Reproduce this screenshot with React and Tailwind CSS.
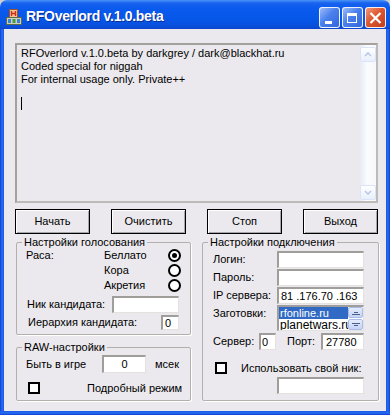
import React from 'react';

const field =
  'bg-white border-t-2 border-l-2 border-r border-b border-t-[#a09e9a] border-l-[#a09e9a] border-r-[#e4e2de] border-b-[#e4e2de]';
const group =
  'border border-[#b2b0ad] rounded-[2px] shadow-[1px_1px_0_#ffffff]';
const legend = 'ml-[5px] px-[2px] leading-[13px]';

function TitleIcon() {
  return (
    <svg width="16" height="16" viewBox="0 0 16 16">
      <rect x="3.5" y="0.5" width="8" height="8" fill="#f2c28f" stroke="#a0522d" />
      <path d="M5.5 2v5M9.5 2v5M5.5 4.5h4" stroke="#d2281e" strokeWidth="1.4" />
      <rect x="0.5" y="8.5" width="15" height="7" fill="#c9d3bd" stroke="#5d6b4a" />
      <rect x="2" y="10" width="3" height="4" fill="#3f7fd8" />
      <rect x="6.5" y="10" width="3" height="4" fill="#4a9b3b" />
      <rect x="11" y="10" width="3" height="4" fill="#3f7fd8" />
    </svg>
  );
}

function CapButton({ kind }) {
  if (kind === 'close') {
    return (
      <div className="w-[21px] h-[21px] rounded-[3px] border border-white/90 bg-[linear-gradient(135deg,#f29a7c,#dc5831_45%,#c33c1c)] flex items-center justify-center">
        <svg width="13" height="12" viewBox="0 0 13 12">
          <path d="M1.5 1l10 10M11.5 1l-10 10" stroke="#fff" strokeWidth="2.2" />
        </svg>
      </div>
    );
  }
  return (
    <div className="relative w-[21px] h-[21px] rounded-[3px] border border-white/90 bg-[linear-gradient(135deg,#9bbcf9,#4a80ec_45%,#3366dc)]">
      {kind === 'min' ? (
        <div className="absolute left-[5px] top-[13px] w-[7px] h-[3px] bg-white" />
      ) : (
        <div className="absolute left-[4px] top-[5px] w-[10px] h-[10px] border border-white border-t-[3px]" />
      )}
    </div>
  );
}

function ScrollArrow({ up }) {
  return (
    <div className="w-[16px] h-[15px] rounded-[2px] border border-[#dbe4f6] bg-[linear-gradient(to_bottom,#fdfeff,#e9effb)] flex items-center justify-center">
      <svg width="8" height="5" viewBox="0 0 8 5">
        <path d={up ? 'M1 4l3-3 3 3' : 'M1 1l3 3 3-3'} stroke="#b9c8e6" strokeWidth="1.6" fill="none" />
      </svg>
    </div>
  );
}

function Radio({ checked }) {
  return (
    <div className="w-[13px] h-[13px] rounded-full border-2 border-black bg-white flex items-center justify-center">
      {checked && <div className="w-[5px] h-[5px] rounded-full bg-black" />}
    </div>
  );
}

function Check() {
  return <div className="w-[12px] h-[12px] border-2 border-black bg-white" />;
}

function Button({ children }) {
  return (
    <button className="w-[75px] h-[25px] border border-black bg-[#ebe9ed] shadow-[inset_1px_1px_0_#ffffff,inset_-1px_-1px_0_#a7a6aa] leading-[13px]">
      {children}
    </button>
  );
}

function ListUpDown({ up }) {
  return (
    <div className="h-[12px] rounded-[2px] border border-[#a9bde6] bg-[linear-gradient(to_bottom,#e4ecfd,#c2d3f6)] flex items-center justify-center">
      <svg width="8" height="4" viewBox="0 0 8 4">
        <path d={up ? 'M0 3.5h8M2 1.5h4' : 'M0 0.5h8M2 2.5h4'} stroke="#4d5f86" strokeWidth="1.2" />
      </svg>
    </div>
  );
}

export default function App() {
  const races = ['Беллато', 'Кора', 'Акретия'];

  return (
    <div className="w-[390px] h-[415px] overflow-hidden bg-[#cfcfcf] font-['Liberation_Sans',Arial,sans-serif] text-[11px] leading-[13px] text-black">
      {/* title bar */}
      <div className="h-[29px] rounded-t-[7px] flex items-start bg-[linear-gradient(to_bottom,#4a94f7_0px,#1863ef_3px,#0a5aee_9px,#0656e8_20px,#0a4fdc_26px,#0b46cc_29px)]">
        <div className="ml-[6px] mt-[9px]">
          <TitleIcon />
        </div>
        <div className="ml-[4px] mt-[8px] text-white font-bold text-[14px] leading-[16px] tracking-[-0.3px] [text-shadow:1px_1px_0_#0b2f9c]">
          RFOverlord v.1.0.beta
        </div>
        <div className="ml-auto mr-[4px] mt-[7px] flex gap-[2px]">
          <CapButton kind="min" />
          <CapButton kind="max" />
          <CapButton kind="close" />
        </div>
      </div>

      <div className="flex h-[382px]">
        <div className="w-[4px] bg-[linear-gradient(to_right,#0b3fd2,#2a6cf1_50%,#1858e6)]" />
        <div className="w-[382px] bg-[#ebe9ed] pl-[11px] pt-[14px] flex flex-col">
          {/* log memo */}
          <div className="w-[363px] h-[160px] flex border-2 border-t-[#a3a19d] border-l-[#a3a19d] border-r-[#bdbbb8] border-b-[#bdbbb8]">
            <div className="flex-1 pl-[4px] pt-[2px]">
              <div>RFOverlord v.1.0.beta by darkgrey / dark@blackhat.ru</div>
              <div>Coded special for niggah</div>
              <div>For internal usage only. Private++</div>
              <div className="mt-[11px] w-px h-[13px] bg-black" />
            </div>
            <div className="w-[16px] flex flex-col justify-between pt-[2px] pb-[1px] bg-[linear-gradient(to_right,#e6ebf6,#fbfcfe_45%,#f5f7fc)]">
              <ScrollArrow up />
              <ScrollArrow />
            </div>
          </div>

          {/* buttons */}
          <div className="mt-[6px] flex gap-[21px]">
            <Button>Начать</Button>
            <Button>Очистить</Button>
            <Button>Стоп</Button>
            <Button>Выход</Button>
          </div>

          <div className="mt-[2px] flex">
            {/* left column */}
            <div className="ml-[1px] w-[175px] flex flex-col">
              <fieldset className={`${group} h-[99px]`}>
                <legend className={legend}>Настройки голосования</legend>
                <div className="-mt-px">
                  {races.map((r, i) => (
                    <div key={r} className="flex items-center h-[15px]">
                      <div className="w-[87px] pl-[9px]">{i === 0 ? 'Раса:' : ''}</div>
                      <div className="w-[64px]">{r}</div>
                      <Radio checked={i === 0} />
                    </div>
                  ))}
                </div>
                <div className="mt-[3px] flex items-center h-[17px] pl-[10px]">
                  <div className="w-[85px]">Ник кандидата:</div>
                  <div className={`${field} w-[67px] h-[17px]`} />
                </div>
                <div className="mt-[2px] flex items-center h-[15px] pl-[11px]">
                  <div className="w-[133px]">Иерархия кандидата:</div>
                  <div className={`${field} w-[18px] h-[15px] pl-[2px] leading-[12px]`}>0</div>
                </div>
              </fieldset>

              <fieldset className={`${group} mt-[6px] h-[60px]`}>
                <legend className={legend}>RAW-настройки</legend>
                <div className="mt-[1px] flex items-center h-[18px] pl-[9px]">
                  <div className="w-[76px]">Быть в игре</div>
                  <div className={`${field} w-[44px] h-[18px] text-center leading-[14px]`}>0</div>
                  <div className="ml-[9px]">мсек</div>
                </div>
                <div className="mt-[9px] flex items-center h-[12px] pl-[11px]">
                  <Check />
                  <div className="ml-[47px]">Подробный режим</div>
                </div>
              </fieldset>
            </div>

            {/* right column */}
            <fieldset className={`${group} ml-[11px] w-[177px] h-[165px]`}>
              <legend className={legend}>Настройки подключения</legend>
              <div className="mt-[2px] flex items-center h-[17px] pl-[10px]">
                <div className="w-[64px]">Логин:</div>
                <div className={`${field} w-[87px] h-[17px]`} />
              </div>
              <div className="mt-[1px] flex items-center h-[17px] pl-[10px]">
                <div className="w-[64px]">Пароль:</div>
                <div className={`${field} w-[87px] h-[17px]`} />
              </div>
              <div className="mt-[1px] flex items-center h-[17px] pl-[10px]">
                <div className="w-[64px]">IP сервера:</div>
                <div className={`${field} w-[87px] h-[17px] pl-[2px] leading-[14px]`}>81 .176.70 .163</div>
              </div>
              <div className="mt-[1px] flex items-start pl-[10px]">
                <div className="w-[64px] pt-[2px]">Заготовки:</div>
                <div className={`${field} w-[87px] h-[26px] flex overflow-hidden`}>
                  <div className="flex-1 overflow-hidden">
                    <div className="h-[12px] leading-[12px] bg-[#316ac5] text-white pl-[1px]">rfonline.ru</div>
                    <div className="h-[13px] leading-[13px] pl-[1px] text-[12px] whitespace-nowrap">planetwars.ru</div>
                  </div>
                  <div className="w-[15px] flex flex-col gap-px">
                    <ListUpDown up />
                    <ListUpDown />
                  </div>
                </div>
              </div>
              <div className="mt-[2px] flex items-center h-[17px] pl-[10px]">
                <div className="w-[46px]">Сервер:</div>
                <div className={`${field} w-[17px] h-[17px] pl-[1px] leading-[14px]`}>0</div>
                <div className="ml-[11px] w-[34px]">Порт:</div>
                <div className={`${field} w-[43px] h-[17px] pl-[3px] leading-[14px]`}>27780</div>
              </div>
              <div className="mt-[12px] flex items-center h-[12px] pl-[12px]">
                <Check />
                <div className="ml-[14px]">Использовать свой ник:</div>
              </div>
              <div className={`${field} mt-[3px] ml-[74px] w-[87px] h-[17px]`} />
            </fieldset>
          </div>
        </div>
        <div className="w-[4px] bg-[linear-gradient(to_left,#0b3fd2,#2a6cf1_50%,#1858e6)]" />
      </div>
      <div className="h-[4px] bg-[linear-gradient(to_bottom,#1858e6,#2a6cf1_50%,#0b3fd2)]" />
    </div>
  );
}
